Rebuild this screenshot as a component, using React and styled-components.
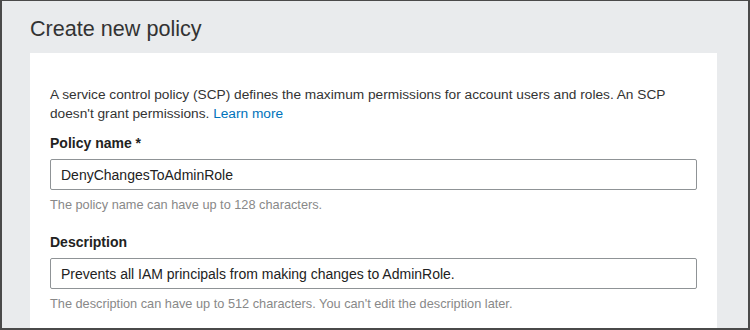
import React from 'react'
import styled, { createGlobalStyle } from 'styled-components'

const GlobalStyle = createGlobalStyle`
    body {
        margin: 0;
        font-family: "Liberation Sans", Arial, sans-serif;
        background: #ffffff;
    }
`;

const Frame = styled.div`
    box-sizing: border-box;
    width: 750px;
    height: 330px;
    overflow: hidden;
    background: #e9ebed;
    border: 2px solid #4a4a4a;
    border-top-width: 1px;
    padding: 15px 31px 0 28px;
    display: flex;
    flex-direction: column;
`;

const Title = styled.h1`
    margin: 0 0 11px 0;
    font-size: 21.6px;
    line-height: 26px;
    font-weight: 400;
    color: #333333;
`;

const Card = styled.div`
    background: #ffffff;
    padding: 32px 20px 20px 20px;
    flex: 1;
`;

const Intro = styled.p`
    margin: 0 0 11px 0;
    font-size: 13.7px;
    line-height: 19px;
    color: #333333;
`;

const Link = styled.a`
    color: #0073bb;
    text-decoration: none;
`;

const Field = styled.div`
    display: flex;
    flex-direction: column;
    margin-bottom: ${p => p.$last ? 0 : '20px'};
`;

const Label = styled.label`
    font-size: 14px;
    line-height: 19px;
    font-weight: 700;
    color: #222222;
    margin-bottom: 6px;
`;

const Input = styled.div`
    box-sizing: border-box;
    height: 31px;
    border: 1px solid #8f9396;
    border-radius: 2px;
    padding: 0 10px;
    display: flex;
    align-items: center;
    font-size: 14px;
    color: #222222;
`;

const Hint = styled.span`
    margin-top: 6px;
    font-size: 12.75px;
    line-height: 17px;
    color: #888888;
`;

export default function App() {
    return (
        <>
            <GlobalStyle />
            <Frame>
                <Title>Create new policy</Title>
                <Card>
                    <Intro>
                        A service control policy (SCP) defines the maximum permissions for account users and roles. An SCP doesn't grant permissions. <Link href="#">Learn more</Link>
                    </Intro>
                    <Field>
                        <Label>Policy name *</Label>
                        <Input>DenyChangesToAdminRole</Input>
                        <Hint>The policy name can have up to 128 characters.</Hint>
                    </Field>
                    <Field $last>
                        <Label>Description</Label>
                        <Input>Prevents all IAM principals from making changes to AdminRole.</Input>
                        <Hint>The description can have up to 512 characters. You can't edit the description later.</Hint>
                    </Field>
                </Card>
            </Frame>
        </>
    );
}
